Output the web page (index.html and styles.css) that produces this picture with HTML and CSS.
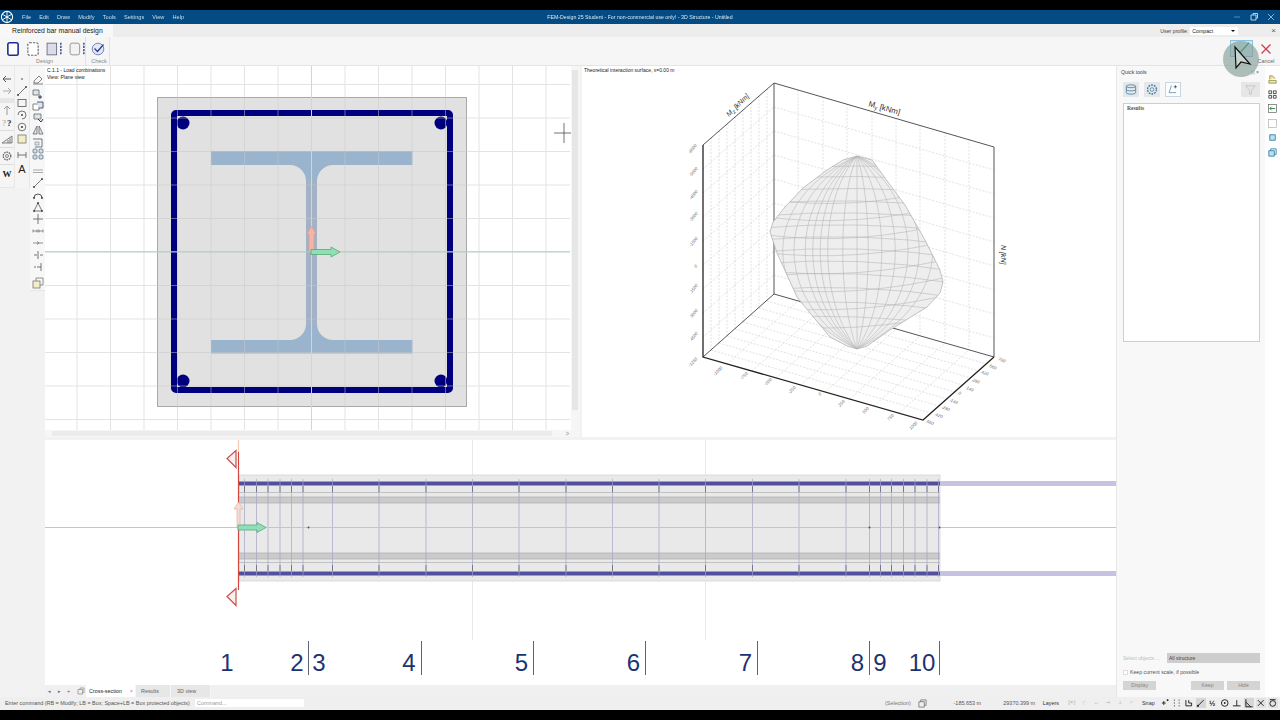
FILE: index.html
```html
<!DOCTYPE html>
<html lang="en">
<head>
<meta charset="utf-8">
<title>FEM-Design 25 Student</title>
<link rel="stylesheet" href="styles.css">
</head>
<body>
<div class="app">
  <div class="letterbox"></div>
  <header class="titlebar">
    <svg class="logo" viewBox="0 0 14 14"><circle cx="7" cy="7" r="5.600" fill="none" stroke="#fff" stroke-width="1.100"/><path d="M2 4l10 6M2 10l10-6M7 1v12" stroke="#fff" stroke-width=".9" fill="none"/></svg>
    <nav class="menu"><span>File</span><span>Edit</span><span>Draw</span><span>Modify</span><span>Tools</span><span>Settings</span><span>View</span><span>Help</span></nav>
    <div class="doc-title">FEM-Design 25 Student - For non-commercial use only! - 3D Structure - Untitled</div>
    <div class="winctl">
      <svg viewBox="0 0 10 10"><path d="M2 5h6" stroke="#4d8fc0" stroke-width="1"/></svg>
      <svg viewBox="0 0 10 10"><path d="M2 3h5v5H2zM4 3V1.500h4.500V6H7" stroke="#b9d3e6" fill="none" stroke-width="1"/></svg>
      <svg viewBox="0 0 10 10"><path d="M2 2l6 6M8 2l-6 6" stroke="#7fb0d2" stroke-width="1"/></svg>
    </div>
  </header>
  <div class="tabrow">
    <div class="mode-tab">Reinforced bar manual design</div>
    <div class="profile"><span>User profile:</span><div class="profile-select"><span>Compact</span><i></i></div><b>×</b></div>
  </div>
  <div class="ribbon">
    <div class="rib-group rib-design">
      <div class="rib-icons">
        <svg class="r16" viewBox="0 0 12 14"><rect x="1.500" y="1.500" width="9" height="11" rx="1.500" fill="#fff" stroke="#1c2f8f" stroke-width="1.400"/></svg>
        <svg class="r16" viewBox="0 0 12 14"><rect x="1.500" y="1.500" width="9" height="11" rx="1.500" fill="#fff" stroke="#666" stroke-width="1" stroke-dasharray="2 1"/></svg>
        <svg class="r16 rw" viewBox="0 0 16 14"><rect x="1" y="1.500" width="9" height="11" fill="#dcdce8" stroke="#667" stroke-width=".8"/><path d="M14 1v12" stroke="#1c2f8f" stroke-width="1.200" stroke-dasharray="2 1"/></svg>
        <svg class="r16 rw" viewBox="0 0 16 14"><rect x="1" y="1.500" width="9" height="11" rx="2" fill="#f2f2f2" stroke="#888" stroke-width=".8"/><path d="M14 1v12" stroke="#1c2f8f" stroke-width="1.200" stroke-dasharray="2 1"/></svg>
      </div>
      <div class="rib-label">Design</div>
    </div>
    <div class="rib-group rib-check">
      <div class="rib-icons">
        <svg class="r16" viewBox="0 0 14 14"><circle cx="7" cy="7" r="5.800" fill="#e4e8f6" stroke="#7c86b8"/><path d="M3.500 6.500l3 3 6-7" fill="none" stroke="#27408f" stroke-width="1.300"/></svg>
      </div>
      <div class="rib-label">Check</div>
    </div>
    <div class="rib-actions">
      <div class="rib-ok"><svg viewBox="0 0 23 17"><path d="M7 13l3 0 10-11" fill="none" stroke="#2e9a4e" stroke-width="1.500"/></svg></div>
      <div class="rib-cancel"><svg viewBox="0 0 12 12"><path d="M1.500 1.500l9 9M10.500 1.500l-9 9" stroke="#d23c4a" stroke-width="1.300"/></svg><span>Cancel</span></div>
    </div>
  </div>

  <main class="main">
    <aside class="tools">
      <div class="tcol tcol-a">
        <svg class="ic" viewBox="0 0 14 12"><path d="M11 6H3M6 3L3 6l3 3" fill="none" stroke="#555"/></svg>
        <svg class="ic" viewBox="0 0 14 12"><path d="M3 6h8M8 3l3 3-3 3" fill="none" stroke="#aaa"/></svg>
        <div class="tsep"></div>
        <svg class="ic" viewBox="0 0 14 12"><path d="M7 11V2M4 5l3-3 3 3" fill="none" stroke="#999"/></svg>
        <svg class="ic" viewBox="0 0 14 12"><text x="2" y="10" class="ic-t">?</text><text x="7" y="10" class="ic-t ic-b">?</text></svg>
        <div class="tsep tsep-s"></div>
        <svg class="ic" viewBox="0 0 14 12"><path d="M2 10h10V3zM8 10V7M10 10V5" fill="#eee" stroke="#666" stroke-width=".8"/></svg>
        <div class="tsep tsep-s"></div>
        <svg class="ic" viewBox="0 0 14 12"><circle cx="7" cy="6" r="3.800" fill="none" stroke="#666" stroke-width="1.300" stroke-dasharray="1.600 .8"/><circle cx="7" cy="6" r="1.500" fill="none" stroke="#666" stroke-width=".8"/></svg>
        <div class="tsep tsep-s"></div>
        <svg class="ic" viewBox="0 0 14 12"><text x="7" y="10" class="ic-w">W</text></svg>
      </div>
      <div class="tcol tcol-b">
        <svg class="ic" viewBox="0 0 14 12"><circle cx="7" cy="6" r=".8" fill="#333"/></svg>
        <svg class="ic" viewBox="0 0 14 12"><path d="M3 10l8-8" stroke="#555" stroke-width=".8"/><circle cx="3" cy="10" r=".9" fill="#333"/><circle cx="11" cy="2" r=".9" fill="#333"/></svg>
        <svg class="ic" viewBox="0 0 14 12"><rect x="3" y="2.500" width="8" height="7" fill="none" stroke="#555" stroke-width=".8"/></svg>
        <svg class="ic" viewBox="0 0 14 12"><path d="M3 6a4 4 0 1 1 4 4" fill="none" stroke="#555" stroke-width=".8"/><circle cx="7" cy="6" r=".9" fill="#333"/></svg>
        <svg class="ic" viewBox="0 0 14 12"><circle cx="7" cy="6" r="3.800" fill="none" stroke="#555" stroke-width=".8"/><circle cx="7" cy="6" r="1" fill="#333"/></svg>
        <svg class="ic" viewBox="0 0 14 12"><rect x="3" y="2" width="8" height="8" fill="#f3efc4" stroke="#777" stroke-width=".8"/></svg>
        <svg class="ic mt4" viewBox="0 0 14 12"><path d="M3 3v6M11 3v6M3 6h8" fill="none" stroke="#555" stroke-width=".8"/></svg>
        <svg class="ic mt1" viewBox="0 0 14 12"><text x="7" y="11" class="ic-a">A</text></svg>
      </div>
      <div class="tcol tcol-c">
        <svg class="ic" viewBox="0 0 14 12"><path d="M3 8l5-5 3 3-4 4H3zM2 11h10" fill="none" stroke="#666" stroke-width=".8"/></svg>
        <svg class="ic mt3" viewBox="0 0 14 12"><path d="M2 2h6v5H2z" fill="#dbe6ef" stroke="#666" stroke-width=".8"/><path d="M9 7v4M7 9h4" stroke="#335" stroke-width="1"/></svg>
        <svg class="ic" viewBox="0 0 14 12"><path d="M2 4h6v6H2z" fill="#fff" stroke="#666" stroke-width=".8"/><path d="M6 2h6v6H8" fill="#dbe6ef" stroke="#335" stroke-width=".8"/></svg>
        <svg class="ic" viewBox="0 0 14 12"><path d="M3 2h7v5H3z" fill="#dbe6ef" stroke="#666" stroke-width=".8"/><path d="M7 7l3 3 2-3" fill="none" stroke="#335"/></svg>
        <svg class="ic" viewBox="0 0 14 12"><path d="M6 2L2 10h4zM8 2l4 8H8z" fill="#dbe6ef" stroke="#666" stroke-width=".8"/></svg>
        <svg class="ic" viewBox="0 0 14 12"><path d="M2 3h9v8H4" fill="none" stroke="#555" stroke-width=".8"/><rect x="4" y="6" width="4" height="3" fill="#dbe6ef" stroke="#789" stroke-width=".6"/></svg>
        <svg class="ic" viewBox="0 0 14 12"><rect x="2" y="1" width="4" height="4" rx="1" fill="#cfe0ea" stroke="#567" stroke-width=".7"/><rect x="8" y="1" width="4" height="4" rx="1" fill="#cfe0ea" stroke="#567" stroke-width=".7"/><rect x="2" y="7" width="4" height="4" rx="1" fill="#cfe0ea" stroke="#567" stroke-width=".7"/><rect x="8" y="7" width="4" height="4" rx="1" fill="#cfe0ea" stroke="#567" stroke-width=".7"/></svg>
        <svg class="ic mt5" viewBox="0 0 14 12"><path d="M2 5h10M2 7.500h10" stroke="#888" stroke-width=".7"/></svg>
        <svg class="ic" viewBox="0 0 14 12"><path d="M3 10l8-8" stroke="#555" stroke-width=".8"/><circle cx="3" cy="10" r=".9" fill="#333"/><circle cx="11" cy="2" r=".9" fill="#333"/></svg>
        <svg class="ic" viewBox="0 0 14 12"><path d="M3 9a4 4 0 0 1 8 0" fill="none" stroke="#555"/><circle cx="3" cy="9" r=".9" fill="#333"/><circle cx="11" cy="9" r=".9" fill="#333"/></svg>
        <svg class="ic" viewBox="0 0 14 12"><path d="M7 2l-4 8h8z" fill="none" stroke="#555" stroke-width=".8"/><circle cx="7" cy="2" r=".9" fill="#333"/><circle cx="3" cy="10" r=".9" fill="#333"/><circle cx="11" cy="10" r=".9" fill="#333"/></svg>
        <svg class="ic" viewBox="0 0 14 12"><path d="M7 1v10M2 6h10" stroke="#555" stroke-width=".8"/></svg>
        <svg class="ic" viewBox="0 0 14 12"><path d="M2 6h10M2 4.500v3M6 4.500v3M8 4.500v3M12 4.500v3" stroke="#666" stroke-width=".7"/></svg>
        <svg class="ic" viewBox="0 0 14 12"><path d="M2 6h10M6 4.500l2 1.500-2 1.500" stroke="#666" stroke-width=".7" fill="none"/></svg>
        <svg class="ic" viewBox="0 0 14 12"><path d="M7 2v8M3 6h3M9 6h3" stroke="#555" stroke-width=".8"/></svg>
        <svg class="ic" viewBox="0 0 14 12"><path d="M10 2v8M3 6h2M6 6h4" stroke="#555" stroke-width=".8"/></svg>
        <svg class="ic mt4" viewBox="0 0 14 12"><rect x="2" y="4" width="7" height="7" fill="#f3efc4" stroke="#777" stroke-width=".8"/><path d="M5 4V1h7v7H9" fill="none" stroke="#777" stroke-width=".8"/></svg>
      </div>
    </aside>

    <section class="center">
      <div class="upper">
        <div class="pane-section">
          <svg class="canvas" viewBox="45 66 535 371">
            <defs>
              <pattern id="grid" patternUnits="userSpaceOnUse" x="76.500" y="84" width="33.500" height="33.500"><path d="M.5 0v33.500M0 .5h33.500" stroke="#c8c8c8" stroke-width="1" fill="none" opacity=".5"/></pattern>
            </defs>
            <rect x="45" y="66" width="535" height="371" fill="#fff"/>
            <rect x="157.500" y="97.500" width="309" height="309" fill="#e1e1e1" stroke="#a9a9a9"/>
            <rect x="174" y="113" width="276" height="277" rx="2" fill="none" stroke="#00007e" stroke-width="6"/>
            <circle cx="183" cy="123" r="6.500" fill="#00007e"/><circle cx="441" cy="123" r="6.500" fill="#00007e"/><circle cx="183" cy="381" r="6.500" fill="#00007e"/><circle cx="441" cy="381" r="6.500" fill="#00007e"/>
            <path d="M211 151h201.500v14H333A16 16 0 0 0 317 181V324A16 16 0 0 0 333 340h79.500v13.500H211V340h79A16 16 0 0 0 306 324V181A16 16 0 0 0 290 165h-79z" fill="#9ab4cd"/>
            <rect x="306" y="180" width="11" height="145" fill="#a3b2c6"/>
            <rect x="45" y="66" width="525" height="364" fill="url(#grid)"/>
            <path d="M311.500 66v364" stroke="#f6c9b2"/>
            <path d="M45 251.800h525" stroke="#9fd8c4"/>
            <path d="M309 252v-18h-2l4.500-8 4.500 8h-2v18z" fill="#f7b3a4" stroke="#e89a84" stroke-width=".6"/>
            <path d="M311 249.500h20V247l9 5-9 5v-2.500h-20z" fill="#8fe0b0" stroke="#58a77e" stroke-width=".8"/>
            <path d="M564 123v20M554 133h20" stroke="#333" stroke-width=".7"/>
            <text x="47" y="71.500" class="cap">C.1.1 - Load combinations</text>
            <text x="47" y="78.500" class="cap">View: Plane view</text>
            <rect x="45" y="430" width="535" height="7" fill="#f6f6f6"/>
            <rect x="52" y="431" width="500" height="5" fill="#ebebeb"/>
            <rect x="571" y="66" width="9" height="371" fill="#f6f6f6"/>
            <rect x="572" y="70" width="6" height="340" fill="#e6e6e6"/>
            <path d="M566 432l3 1.500-3 1.500" fill="none" stroke="#888" stroke-width=".6"/>
          </svg>
        </div>
        <div class="pane-chart">
          <svg class="canvas" viewBox="582 66 534 371">
            <defs>
              <clipPath id="surf"><path d="M857 156l15 4 13 18 20 27 20 35 15 30 3 12-3 11-13 14-37 23-23 16-10 3-10-3-17-9-20-24-13-16-20-44-7-21 3-10 12-15 18-19 24-18 16-10z"/></clipPath>
            </defs>
            <text x="584" y="71.500" class="cap">Theoretical interaction surface, x=0.00 m</text>
            <g class="dash">
              <path d="M798 90V301M823 97V308M847 104V315M872 111V322M896 118V329M920 125V336M945 132V343M969 139V350"/>
              <path d="M774 107l220 63M774 131l220 63M774 155l220 63M774 179l220 63M774 203l220 63M774 227l220 63M774 251l220 63M774 275l220 63"/>
              <path d="M711 138V350M719 131V343M727 124V336M735 117V329M743 110V322M751 103V315M759 96V308M767 89V301"/>
              <path d="M703 169L774 107M703 193L774 131M703 217L774 155M703 241L774 179M703 265L774 203M703 289L774 227M703 313L774 251M703 337L774 275"/>
              <path d="M727 364L798 301M752 371L823 308M776 378L847 315M801 385L872 322M825 392L896 329M850 399L920 336M874 406L945 343M899 413L969 350"/>
              <path d="M711 350L931 413M719 343L939 406M727 336L947 399M735 329L955 392M743 322L963 385M751 315L971 378M759 308L979 371M767 301L987 364"/>
            </g>
            <path d="M774 83V294M774 83L994 147V357M703 145L774 83M774 294L994 357M774 294L703 357" fill="none" stroke="#555" stroke-width="1"/>
            <path d="M703 145V357L923 420L994 357" fill="none" stroke="#222" stroke-width="1.300"/>
            <path d="M857 156l15 4 13 18 20 27 20 35 15 30 3 12-3 11-13 14-37 23-23 16-10 3-10-3-17-9-20-24-13-16-20-44-7-21 3-10 12-15 18-19 24-18 16-10z" fill="#eeeeee" stroke="#aaa" stroke-width=".7"/>
            <g clip-path="url(#surf)" class="mesh">
              <path d="M857 156V349M857 156C758 200 758 300 857 349M857 156C773 200 773 300 857 349M857 156C788 200 788 300 857 349M857 156C798 200 798 300 857 349M857 156C808 200 808 300 857 349M857 156C818 200 818 300 857 349M857 156C838 200 838 300 857 349M857 156C872 200 872 300 857 349M857 156C890 200 890 300 857 349M857 156C908 200 908 300 857 349M857 156C925 200 925 300 857 349M857 156C940 200 940 300 857 349M857 156C958 200 958 300 857 349"/>
              <path d="M760 170Q857 162 960 170M760 180Q857 172 960 182M760 192Q857 184 960 194M760 204Q857 196 960 208M760 216Q857 208 960 220M760 228Q857 220 960 232M760 240Q857 231 960 246M760 252Q857 243 960 258M760 264Q857 255 960 272M760 276Q857 268 960 284M760 290Q857 282 960 298M760 304Q857 297 960 312M760 318Q857 312 960 326"/>
              <path d="M760 198Q857 214 960 184M760 216Q857 230 960 202M760 234Q857 248 960 220M760 252Q857 264 960 238M760 270Q857 282 960 256M760 288Q857 300 960 274M760 306Q857 318 960 292M760 324Q857 336 960 312"/>
            </g>
            <text class="ax" transform="translate(868 106) rotate(16)">M<tspan class="sub" dy="1.500">y</tspan><tspan dy="-1.500"> [kNm]</tspan></text>
            <text class="ax ax-i" transform="translate(729 117) rotate(-45)">M<tspan class="sub" dy="1.500">z</tspan><tspan dy="-1.500"> [kNm]</tspan></text>
            <text class="ax ax-i" transform="translate(1001 245) rotate(90)">N [kN]</text>
            <g class="tick">
              <text transform="translate(690 154) rotate(-50)">-6000</text><text transform="translate(691 177) rotate(-50)">-5000</text><text transform="translate(691 200) rotate(-50)">-4000</text><text transform="translate(691 222) rotate(-50)">-3000</text><text transform="translate(691 247) rotate(-50)">-1500</text><text transform="translate(696 268) rotate(-50)">0</text><text transform="translate(692 293) rotate(-50)">1500</text><text transform="translate(692 318) rotate(-50)">3000</text><text transform="translate(692 341) rotate(-50)">4500</text>
              <text transform="translate(690 367) rotate(-45)">-1250</text><text transform="translate(715 376) rotate(-45)">-1000</text><text transform="translate(742 380) rotate(-45)">-750</text><text transform="translate(766 386) rotate(-45)">-500</text><text transform="translate(790 394) rotate(-45)">-250</text><text transform="translate(820 396) rotate(-45)">0</text><text transform="translate(840 407) rotate(-45)">250</text><text transform="translate(864 414) rotate(-45)">500</text><text transform="translate(889 421) rotate(-45)">750</text><text transform="translate(911 430) rotate(-45)">1000</text>
              <text transform="translate(998 360) rotate(22)">700</text><text transform="translate(989 367) rotate(22)">560</text><text transform="translate(981 373) rotate(22)">420</text><text transform="translate(972 381) rotate(22)">280</text><text transform="translate(966 389) rotate(22)">140</text><text transform="translate(958 394) rotate(22)">0</text><text transform="translate(949 401) rotate(22)">-140</text><text transform="translate(941 408) rotate(22)">-280</text><text transform="translate(934 415) rotate(22)">-420</text><text transform="translate(925 422) rotate(22)">-560</text>
            </g>
          </svg>
        </div>
      </div>
      <div class="longview">
        <svg class="canvas" viewBox="45 440 1071 245">
          <rect x="45" y="440" width="1071" height="245" fill="#fff"/>
          <path d="M472.500 440v200M705.500 440v200" stroke="#e8e8e8"/>
          <rect x="239" y="475" width="701" height="106" fill="#e9e9e9" stroke="#d4d4d4" stroke-width=".8"/>
          <rect x="239" y="497" width="701" height="6" fill="#cbcbcb"/><rect x="239" y="553" width="701" height="6" fill="#cbcbcb"/>
          <path d="M239 492.500h701M239 497h701M239 503h701M239 553h701M239 559h701M239 562.500h701" stroke="#b0b0b0" stroke-width=".7"/>
          <path d="M940 483.500h176M940 573.500h176" stroke="#c6c3e2" stroke-width="5"/>
          <path d="M239 483.500h701M239 573.500h701" stroke="#52509e" stroke-width="4"/>
          <path d="M244.500 479v98M256.500 479v98M268 479v98M280 479v98M291.500 479v98M303 479v98M332.500 479v98M379 479v98M426 479v98M472.500 479v98M519 479v98M566 479v98M612.500 479v98M659 479v98M705.500 479v98M752.500 479v98M799 479v98M846 479v98M869.500 479v98M880.500 479v98M891.500 479v98M903.500 479v98M915 479v98M927 479v98M938.500 479v98" stroke="#a2a2c4" stroke-width=".9" opacity=".75"/>
          <path d="M244.500 486v6M256.500 486v6M268 486v6M280 486v6M291.500 486v6M303 486v6M332.500 486v6M379 486v6M426 486v6M472.500 486v6M519 486v6M566 486v6M612.500 486v6M659 486v6M705.500 486v6M752.500 486v6M799 486v6M846 486v6M869.500 486v6M880.500 486v6M891.500 486v6M903.500 486v6M915 486v6M927 486v6M938.500 486v6M244.500 565v6M256.500 565v6M268 565v6M280 565v6M291.500 565v6M303 565v6M332.500 565v6M379 565v6M426 565v6M472.500 565v6M519 565v6M566 565v6M612.500 565v6M659 565v6M705.500 565v6M752.500 565v6M799 565v6M846 565v6M869.500 565v6M880.500 565v6M891.500 565v6M903.500 565v6M915 565v6M927 565v6M938.500 565v6" stroke="#66667e" stroke-width=".8"/>
          <path d="M45 527.500h1071" stroke="#9fd8c4"/>
          <path d="M238.500 440v12" stroke="#f6c9b2" stroke-width="1.200"/>
          <path d="M238.500 452v138" stroke="#d3473f" stroke-width="1.200"/>
          <path d="M236 450.500l-9 8 9 9z" fill="#fbeeee" stroke="#c8504c" stroke-width="1.200"/>
          <path d="M236 588.500l-9 8 9 9z" fill="#fbeeee" stroke="#c8504c" stroke-width="1.200"/>
          <path d="M237 528v-19h-3l4.500-7 4.500 7h-3v19z" fill="#f3ddd4" stroke="#e8b09c" stroke-width=".7"/>
          <path d="M238 525h19v-2.500l9 5-9 5V530h-19z" fill="#8fe0b8" stroke="#58a77e" stroke-width=".8"/>
          <circle cx="308.500" cy="527.500" r=".9" fill="#446"/><circle cx="869.500" cy="527.500" r=".9" fill="#446"/><circle cx="939.500" cy="527.500" r=".9" fill="#446"/>
          <g class="num">
            <text x="227" y="671">1</text><text x="297" y="671">2</text><text x="319" y="671">3</text><text x="409" y="671">4</text><text x="521.500" y="671">5</text><text x="633.500" y="671">6</text><text x="745.500" y="671">7</text><text x="857.500" y="671">8</text><text x="880" y="671">9</text><text x="922" y="671">10</text>
          </g>
          <path d="M308.500 641v34M421.500 641v34M533.500 641v34M645.500 641v34M757.500 641v34M869.500 641v34M939.500 641v34" stroke="#4a5268" stroke-width=".9"/>
        </svg>
      </div>
      <div class="tabs">
        <div class="tabnav"><span>◂</span><span>▸</span><span>+</span>
          <svg viewBox="0 0 8 8"><path d="M1 2.500h4.500V7H1zM3 2.500V1h4v4.500H5.500" fill="none" stroke="#888" stroke-width=".7"/></svg>
        </div>
        <div class="tab tab-on"><span>Cross-section</span><i>×</i></div>
        <div class="tab tab-res">Results</div>
        <div class="tab tab-3d">3D view</div>
      </div>
    </section>

    <aside class="side">
      <div class="qt">
        <div class="qt-head"><span>Quick tools</span><span class="qt-x">⟩⟨ ×</span></div>
        <div class="qt-btns">
          <div class="qb qb-s"><svg viewBox="0 0 14 14"><path d="M2 3.500c0-2 10-2 10 0s-10 2-10 0zM2 3.500v7c0 2 10 2 10 0v-7M2 7c0 2 10 2 10 0" fill="none" stroke="#4a7f9c" stroke-width=".9"/></svg></div>
          <div class="qb qb-s"><svg viewBox="0 0 14 14"><circle cx="7" cy="7" r="4.800" fill="none" stroke="#4a7f9c" stroke-width="1.500" stroke-dasharray="2 1"/><circle cx="7" cy="7" r="2" fill="none" stroke="#4a7f9c" stroke-width=".8"/></svg></div>
          <div class="qb qb-a"><svg viewBox="0 0 14 14"><path d="M5 2L2 11h9" fill="none" stroke="#4a7f9c" stroke-width=".9"/><path d="M10 1.500v4M8 3.500h4" stroke="#333" stroke-width=".9"/></svg></div>
          <div class="qb qb-d"><svg viewBox="0 0 14 14"><path d="M2 3h10L8 8v4H6V8z" fill="none" stroke="#c6c6c6"/></svg></div>
        </div>
        <div class="results"><span>Results</span></div>
        <div class="select-row"><span>Select objects ...</span><div class="sel">All structure</div></div>
        <div class="check-row"><i></i><span>Keep current scale, if possible</span></div>
        <div class="btn-row"><div class="btn">Display</div><div class="btn btn-r">Keep</div><div class="btn">Hide</div></div>
      </div>
      <div class="strip">
        <svg viewBox="0 0 12 12"><path d="M2 10h8V7H2zM3 6V2h3l3 3" fill="#f3e2a8" stroke="#7a8a3a" stroke-width=".8"/></svg>
        <svg viewBox="0 0 12 12"><path d="M2 2h3v3H2zM7 2h3v3H7zM2 7h3v3H2zM7 7h3v3H7z" fill="none" stroke="#333" stroke-width=".9"/></svg>
        <svg viewBox="0 0 12 12"><rect x="1.500" y="1.500" width="9" height="9" fill="none" stroke="#555" stroke-width=".7"/><path d="M9 6H3M5 4L3 6l2 2" fill="none" stroke="#2a8a4a"/></svg>
        <svg viewBox="0 0 12 12"><rect x="1.500" y="1.500" width="9" height="9" fill="none" stroke="#aaa" stroke-width=".7"/></svg>
        <svg viewBox="0 0 12 12"><path d="M3 3h6v6H3z" fill="#bde0ee" stroke="#3a86a8"/></svg>
        <svg viewBox="0 0 12 12"><path d="M2 4h6v6H2z" fill="#bde0ee" stroke="#3a86a8"/><path d="M4 4V2h6v6H8" fill="none" stroke="#3a86a8"/></svg>
      </div>
    </aside>
  </main>

  <footer class="status">
    <div class="st-cmd">Enter command (RB = Modify; LB = Box; Space+LB = Box protected objects)</div>
    <div class="st-input">Command...</div>
    <div class="st-sel">(Selection)</div>
    <svg class="st-ic" viewBox="0 0 10 10"><path d="M1 3h6v6H1zM3 3V1h6v6H7" fill="none" stroke="#666" stroke-width=".8"/></svg>
    <div class="st-x">-185.653 m</div>
    <div class="st-y">29370.399 m</div>
    <div class="st-layers">Layers</div>
    <div class="st-faint"><span>⟦×⟧</span><span>⁞⁻</span><span>↔</span><span>⇒</span><span>⊥</span><span>♂</span></div>
    <div class="st-snap">Snap</div>
    <div class="st-icons">
      <svg viewBox="0 0 10 10"><path d="M2 5h4M4 3v4M8 1v2M7 2h2" stroke="#222"/></svg>
      <svg viewBox="0 0 10 10"><path d="M2 2h1M7 2h1M2 8h1M7 8h1M2 5h1M7 5h1" stroke="#222"/></svg>
      <svg viewBox="0 0 10 10"><path d="M2 2v6h6V5H5V2" fill="none" stroke="#222"/></svg>
      <svg class="on" viewBox="0 0 10 10"><path d="M2 8L8 2" stroke="#222"/><rect x="1" y="7" width="2" height="2" fill="#222"/></svg>
      <svg viewBox="0 0 10 10"><text x="1" y="8" class="half">½</text></svg>
      <svg viewBox="0 0 10 10"><circle cx="5" cy="5" r="3.500" fill="none" stroke="#222"/><circle cx="5" cy="5" r="1" fill="#222"/></svg>
      <svg viewBox="0 0 10 10"><path d="M5 2v6M1 8h8" stroke="#222"/></svg>
      <svg class="on" viewBox="0 0 10 10"><path d="M2 1v8h7M2 4l5 5" fill="none" stroke="#222"/></svg>
      <svg class="on2" viewBox="0 0 10 10"><path d="M2 2l6 6M8 2L2 8" stroke="#222"/></svg>
      <svg class="on2" viewBox="0 0 10 10"><path d="M2 1.500h6" stroke="#222"/><circle cx="5" cy="5.500" r="3" fill="none" stroke="#222"/></svg>
    </div>
  </footer>
  <div class="letterbox"></div>

  <div class="cursor">
    <svg viewBox="0 0 36 38"><circle cx="18" cy="19" r="18" fill="#7f9a92" opacity=".62"/><path d="M12 7l1 21 5-6 9 2z" fill="#c8d4d0" stroke="#111" stroke-width="1.200"/></svg>
  </div>
</div>
</body>
</html>
```

FILE: styles.css
```css
* { box-sizing: border-box; }
html, body { margin: 0; padding: 0; background: #000; }
body { width: 1280px; height: 720px; overflow: hidden; font-family: "Liberation Sans", Arial, sans-serif; }
.app { position: relative; width: 1280px; height: 720px; display: flex; flex-direction: column; filter: blur(.35px); }
.letterbox { height: 10px; flex: none; background: #000; }

.titlebar { height: 14px; flex: none; background: #034b82; display: flex; align-items: center; position: relative; color: #cfdfeb; font-size: 5.600px; }
.logo { width: 14px; height: 14px; flex: none; }
.menu { display: flex; margin-left: 8px; gap: 8.150px; }
.doc-title { position: absolute; left: 0; right: 0; text-align: center; font-size: 5.220px; color: #dce7ef; }
.winctl { margin-left: auto; display: flex; gap: 7px; padding-right: 4px; }
.winctl svg { width: 10px; height: 10px; }

.tabrow { height: 13px; flex: none; background: #ededed; display: flex; align-items: stretch; }
.mode-tab { width: 113px; background: #f8f8f8; padding: 0 0 0 12px; font-size: 6.800px; line-height: 13px; color: #222; white-space: nowrap; }
.profile { margin-left: auto; display: flex; align-items: center; font-size: 5.200px; color: #444; padding-right: 4px; }
.profile-select { width: 48px; height: 8px; background: #fff; margin-left: 2px; display: flex; align-items: center; justify-content: space-between; padding: 0 3px 0 2px; color: #222; }
.profile-select i { border: 2px solid transparent; border-top-color: #111; border-bottom: 0; }
.profile b { font-weight: 400; font-size: 8px; margin-left: 33px; color: #555; }

.ribbon { height: 29px; flex: none; background: #f6f6f6; border-bottom: 1px solid #e4e4e4; display: flex; position: relative; }
.rib-group { display: flex; flex-direction: column; align-items: flex-start; border-right: 1px solid #e2e2e2; }
.rib-design { width: 86px; padding-left: 6px; }
.rib-check { width: 24px; padding-left: 5px; }
.rib-icons { display: flex; gap: 6px; height: 21px; align-items: center; padding-top: 2px; }
.r16 { width: 14px; height: 16px; flex: none; }
.rw { width: 17px; height: 16px; }
.rib-label { font-size: 5.400px; color: #888; line-height: 7px; align-self: center; margin-right: 2px; }
.rib-actions { margin-left: auto; display: flex; padding-right: 1px; }
.rib-ok { width: 23px; height: 17px; margin-top: 3px; background: #cfe6f3; border: 1px solid #8fc1dc; }
.rib-ok svg { display: block; width: 100%; height: 100%; }
.rib-cancel { width: 26px; display: flex; flex-direction: column; align-items: center; font-size: 5.400px; color: #666; padding-top: 6px; gap: 3px; }
.rib-cancel svg { width: 12px; height: 12px; flex: none; }

.main { flex: 1; min-height: 0; display: flex; background: #f2f2f2; }
.tools { width: 45px; flex: none; display: flex; align-items: flex-start; }
.tcol { width: 15px; display: flex; flex-direction: column; align-items: center; padding-top: 7px; }
.tcol-a { background: #f5f5f5; height: 122px; border-bottom: 1px solid #e6e6e6; border-right: 1px solid #e8e8e8; }
.tcol-b { background: #f5f5f5; height: 122px; border-right: 1px solid #e8e8e8; }
.tcol-c { background: #f7f7f7; height: 225px; border-bottom: 1px solid #e6e6e6; }
.ic { width: 14px; height: 12px; flex: none; display: block; }
.mt1 { margin-top: 1px; } .mt3 { margin-top: 3px; } .mt4 { margin-top: 4px; } .mt5 { margin-top: 5px; }
.tsep { width: 14px; height: 5px; margin: 1px 0; background: #e6e6e6; }
.tsep-s { height: 1px; margin: 2px 0; background: #ddd; }
.ic-t { font: 9px "Liberation Serif", serif; fill: #999; }
.ic-b { fill: #333; font-weight: 700; }
.ic-w { font: 700 9px "Liberation Serif", serif; fill: #222; text-anchor: middle; }
.ic-a { font: 11px "Liberation Sans", sans-serif; fill: #222; text-anchor: middle; }

.center { width: 1071px; flex: none; display: flex; flex-direction: column; }
.upper { height: 371px; flex: none; display: flex; justify-content: space-between; margin-bottom: 3px; }
.pane-section { width: 535px; }
.pane-chart { width: 534px; background: #fff; }
.canvas { display: block; width: 100%; height: 100%; }
.cap { font: 5px "Liberation Sans", sans-serif; fill: #222; }
.dash path { fill: none; stroke: #cdcdcd; stroke-width: .6; stroke-dasharray: 2 1.500; }
.mesh path { fill: none; stroke: #b4b4b4; stroke-width: .55; }
.ax { font: 8px "Liberation Sans", sans-serif; fill: #333; }
.ax-i { font-style: italic; font-size: 7px; }
.sub { font-size: 5.500px; }
.tick text { font: italic 4.300px "Liberation Sans", sans-serif; fill: #666; }
.num text { font: 24px "Liberation Sans", sans-serif; fill: #1d3370; text-anchor: middle; }
.longview { height: 245px; flex: none; }

.tabs { height: 12px; flex: none; display: flex; align-items: stretch; background: #f0f0f0; font-size: 5.400px; color: #444; }
.tabnav { width: 41px; flex: none; display: flex; align-items: center; gap: 6.500px; padding-left: 3px; color: #666; }
.tabnav svg { width: 8px; height: 8px; flex: none; }
.tab { display: flex; align-items: center; background: #e7e7e7; color: #666; border-right: 1px solid #f6f6f6; flex: none; }
.tab-on { width: 50px; background: #fff; color: #222; justify-content: space-between; padding: 0 2px 0 3px; }
.tab-on i { font-style: normal; color: #999; }
.tab-res { width: 35px; padding-left: 5px; }
.tab-3d { width: 40px; padding-left: 6px; }

.side { width: 164px; flex: none; display: flex; background: #fff; }
.qt { width: 149px; display: flex; flex-direction: column; background: #f8f8f8; padding-left: 6px; padding-right: 5px; border-left: 1px solid #e6e6e6; }
.qt-head { height: 11px; display: flex; justify-content: space-between; align-items: center; font-size: 5.200px; color: #444; margin-left: -2px; }
.qt-x { color: #666; margin-right: 1px; }
.qt-btns { display: flex; gap: 5px; margin-top: 5px; height: 15px; }
.qb { width: 16px; height: 15px; padding: 1px; }
.qb svg { display: block; width: 100%; height: 100%; }
.qb-s { background: #e4e8ec; }
.qb-a { background: #fbfdff; border: 1px solid #c9d6df; }
.qb-d { margin-left: auto; width: 19px; background: #e6e6e6; }
.results { height: 239px; margin-top: 6px; background: #fff; border: 1px solid #cfcfcf; padding: 1px 3px; font: 700 5.500px "Liberation Serif", serif; color: #555; }
.select-row { margin-top: auto; display: flex; align-items: center; font-size: 5px; color: #bbb; }
.select-row span { width: 44px; flex: none; }
.sel { flex: 1; height: 10px; background: #cdcdcd; color: #444; padding-left: 2px; line-height: 10px; }
.check-row { display: flex; align-items: center; gap: 2px; font-size: 5.200px; height: 6px; color: #555; margin-top: 6px; }
.check-row i { width: 5px; height: 5px; background: #fff; border: 1px solid #ddd; }
.btn-row { display: flex; gap: 3px; margin-top: 6px; margin-bottom: 7px; }
.btn { width: 33px; height: 9px; background: #d4d4d4; color: #888; font-size: 5.200px; text-align: center; line-height: 9px; }
.btn-r { margin-left: auto; }
.strip { width: 15px; flex: none; display: flex; flex-direction: column; align-items: center; padding-top: 8px; gap: 3.600px; background: #fff; }
.strip svg { width: 11px; height: 11px; flex: none; }

.status { height: 13px; flex: none; background: #efefef; display: flex; align-items: center; padding-bottom: 1px; font-size: 5.430px; color: #555; white-space: nowrap; }
.status > * { flex: none; }
.st-cmd { width: 195px; padding-left: 5px; }
.st-input { width: 109px; height: 8px; background: #fff; color: #999; padding-left: 2px; line-height: 8px; }
.st-sel { margin-left: 581px; width: 33px; color: #777; }
.st-ic { width: 9px; height: 9px; }
.st-x { width: 54px; text-align: right; }
.st-y { width: 54px; text-align: right; }
.st-layers { width: 24px; text-align: right; color: #333; }
.st-faint { width: 83px; display: flex; justify-content: space-between; padding: 0 9px; color: #aaa; }
.st-snap { width: 18px; color: #333; }
.st-icons { display: flex; gap: 2.500px; }
.st-icons svg { width: 9.500px; height: 10px; flex: none; }
.st-icons .on { background: #d6d6d6; }
.st-icons .on2 { background: #e2e2e2; }
.half { font: 700 8px "Liberation Sans", sans-serif; fill: #222; }

.cursor { position: absolute; left: 1223px; top: 40px; width: 36px; height: 38px; }
.cursor svg { display: block; width: 100%; height: 100%; }
```
